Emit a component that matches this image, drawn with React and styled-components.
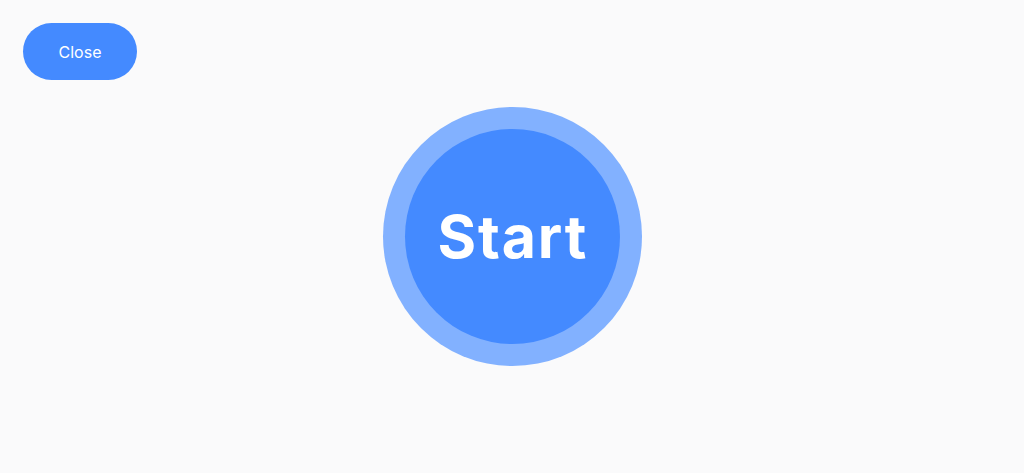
import React from 'react';
import styled, { createGlobalStyle } from 'styled-components';

const GlobalStyle = createGlobalStyle`
  html, body {
    margin: 0;
    padding: 0;
    background: #fafafb;
    font-family: Inter, "Liberation Sans", sans-serif;
  }
`;

// one grid cell, both layers share it
const Screen = styled.div`
  height: 100vh;
  display: grid;
  grid-template-areas: 'stage';
`;

const TopBar = styled.div`
  grid-area: stage;
  align-self: start;
  justify-self: start;
  padding: 23px;
  z-index: 1;
`;

const CloseButton = styled.button`
  width: 114px;
  height: 57px;
  border: none;
  border-radius: 29px;
  background: #448aff;
  color: #ffffff;
  font-family: Inter, "Liberation Sans", sans-serif;
  font-size: 16px;
  font-weight: 400;
  cursor: pointer;
`;

const Center = styled.div`
  grid-area: stage;
  display: flex;
  align-items: center;
  justify-content: center;
`;

const Ring = styled.div`
  width: 259px;
  height: 259px;
  border-radius: 50%;
  background: #82b1ff;
  display: flex;
  align-items: center;
  justify-content: center;
`;

const StartButton = styled.button`
  width: 215px;
  height: 215px;
  border: none;
  border-radius: 50%;
  background: #448aff;
  color: #ffffff;
  font-family: Inter, "Liberation Sans", sans-serif;
  font-size: 59px;
  font-weight: 700;
  letter-spacing: 1.8px;
  text-indent: 1.8px;
  cursor: pointer;
  padding: 0;
`;

const App = () => {
  return (
    <>
      <GlobalStyle />
      <Screen>
        <TopBar>
          <CloseButton>Close</CloseButton>
        </TopBar>
        <Center>
          <Ring>
            <StartButton>Start</StartButton>
          </Ring>
        </Center>
      </Screen>
    </>
  );
};

export default App;
